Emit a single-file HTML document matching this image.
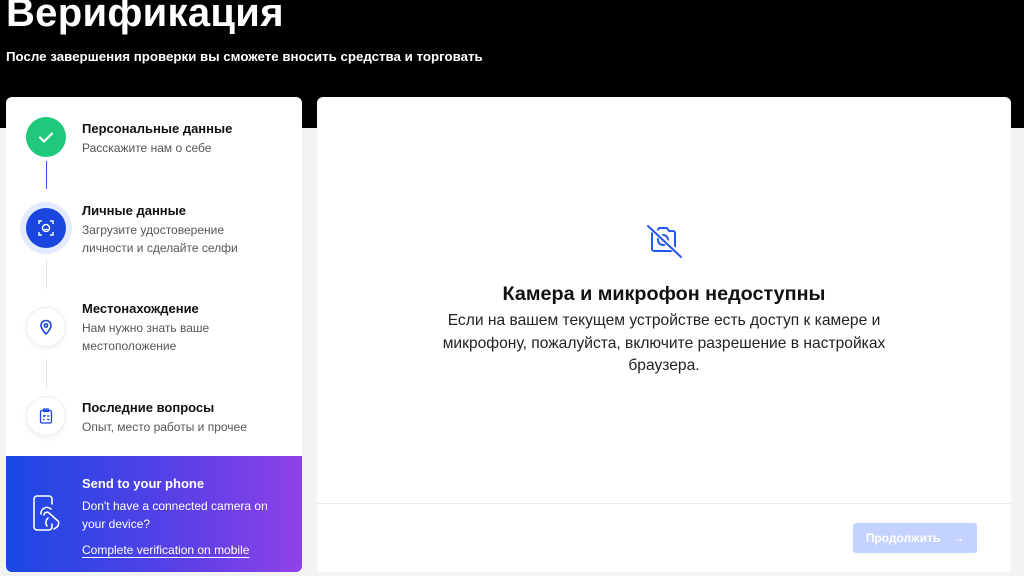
<!DOCTYPE html>
<html><head><meta charset="utf-8"><style>
*{margin:0;padding:0;box-sizing:border-box}
body{width:1024px;height:576px;overflow:hidden;background:#f3f3f3;font-family:"Liberation Sans",Arial,sans-serif;position:relative}
.hdr{position:absolute;left:0;top:0;width:1024px;height:128px;background:#000}
h1{position:absolute;left:6px;top:-9px;color:#fff;font-size:40px;font-weight:700;letter-spacing:0.3px}
.sub{position:absolute;left:6px;top:49px;color:#fff;font-size:13.3px;font-weight:700}
.left{position:absolute;left:6px;top:97px;width:296px;height:475px;background:#fff;border-radius:6px;overflow:hidden}
.step{position:absolute;left:76px}
.step b{display:block;font-size:13px;color:#111}
.step span{display:block;font-size:12px;color:#555;line-height:18px;margin-top:3px}
.circ{position:absolute;width:40px;height:40px;border-radius:50%;left:20px;display:flex;align-items:center;justify-content:center}
.line{position:absolute;left:40px;width:1px}
.promo{position:absolute;left:0;top:359px;width:296px;height:116px;background:linear-gradient(90deg,#1a48e3,#5540e6 55%,#8f41e8)}
.right{position:absolute;left:317px;top:97px;width:694px;height:475px;background:#fff;border-radius:6px}
.ttl{position:absolute;left:0;width:694px;text-align:center;top:186px;font-size:19.8px;font-weight:700;color:#111}
.desc{position:absolute;left:112px;width:470px;text-align:center;top:213px;font-size:15.6px;line-height:22.5px;color:#222}
.div{position:absolute;left:0;top:406px;width:694px;height:1px;background:#ebebeb}
.btn{position:absolute;left:536px;top:426px;width:124px;height:30px;background:#c3d2ff;border-radius:3px;color:#fff;font-size:12px;font-weight:700;display:flex;align-items:center;justify-content:center;gap:12px}
</style></head><body>
<div class="hdr"></div>
<h1>Верификация</h1>
<div class="sub">После завершения проверки вы сможете вносить средства и торговать</div>
<div class="left">
 <div class="circ" style="top:20px;background:#1ec97b"><svg width="18" height="18" viewBox="0 0 18 18"><path d="M3 9.5l4 4 8-8" stroke="#fff" stroke-width="2.2" fill="none" stroke-linecap="round" stroke-linejoin="round"/></svg></div>
 <div class="line" style="top:64px;height:28px;background:#2a55e5"></div>
 <div class="circ" style="top:111px;background:#1a45df;box-shadow:0 0 0 6px #e4eaff"><svg width="18" height="18" viewBox="0 0 18 18" fill="none" stroke="#fff" stroke-width="1.4"><path d="M2 5V2h3M13 2h3v3M16 13v3h-3M5 16H2v-3"/><circle cx="9" cy="9" r="3.5"/><path d="M7.5 10c.8.8 2.2.8 3 0"/></svg></div>
 <div class="line" style="top:162px;height:30px;background:#e6e6e6"></div>
 <div class="circ" style="top:210px;background:#fff;border:1px solid #eee;box-shadow:0 2px 6px rgba(0,0,0,.06)"><svg width="14" height="16" viewBox="0 0 14 16" fill="none" stroke="#1a45df" stroke-width="1.6"><path d="M7 15s5-5 5-8.5A5 5 0 002 6.5C2 10 7 15 7 15z"/><circle cx="7" cy="6.5" r="1.6"/></svg></div>
 <div class="line" style="top:262px;height:30px;background:#e6e6e6"></div>
 <div class="circ" style="top:299px;background:#fff;border:1px solid #eee;box-shadow:0 2px 6px rgba(0,0,0,.06)"><svg width="14" height="16" viewBox="0 0 14 16" fill="none" stroke="#1a45df" stroke-width="1.3"><rect x="1.5" y="2.5" width="11" height="12.5" rx="1.5"/><rect x="4.5" y="1" width="5" height="2.5" rx=".5"/><path d="M4 7.5l1 1 1.5-1.5M8 8h2.5M4 11.5h1.5M8 11.5h2.5"/></svg></div>
 <div class="step" style="top:24px"><b>Персональные данные</b><span>Расскажите нам о себе</span></div>
 <div class="step" style="top:106px"><b>Личные данные</b><span>Загрузите удостоверение<br>личности и сделайте селфи</span></div>
 <div class="step" style="top:204px"><b>Местонахождение</b><span>Нам нужно знать ваше<br>местоположение</span></div>
 <div class="step" style="top:303px"><b>Последние вопросы</b><span>Опыт, место работы и прочее</span></div>
 <div class="promo">
  <svg style="position:absolute;left:26px;top:38px" width="36" height="38" viewBox="0 0 36 38" fill="none" stroke="#fff" stroke-width="1.6" stroke-linecap="round" stroke-linejoin="round"><path d="M20 30v3a3 3 0 01-3 3H5a3 3 0 01-3-3V5a3 3 0 013-3h12a3 3 0 013 3v5"/><path d="M9 20a6 6 0 0110-5"/><path d="M12 21a3 3 0 015-2l9 8c1 1 1 4-1 6l-3 2"/><path d="M16 24c-2 2-3 5-1 8"/></svg>
  <div style="position:absolute;left:76px;top:19px;color:#fff"><b style="font-size:13px">Send to your phone</b><div style="font-size:12px;line-height:18px;margin-top:4px">Don't have a connected camera on<br>your device?</div><div style="font-size:12px;margin-top:10px;text-decoration:underline;text-underline-offset:3px">Complete verification on mobile</div></div>
 </div>
</div>
<div class="right">
 <svg style="position:absolute;left:323px;top:126px" width="46" height="36" viewBox="0 0 46 36" fill="none" stroke="#2457f0" stroke-width="2" stroke-linecap="round" stroke-linejoin="round"><path d="M14 8h3l2-3h8l2 3h4a2 2 0 012 2v16a2 2 0 01-2 2H14a2 2 0 01-2-2V10a2 2 0 012-2z"/><circle cx="23" cy="17" r="5"/><path d="M8 2l34 32" stroke="#fff" stroke-width="5"/><path d="M8 3l33 31"/></svg>
 <div class="ttl">Камера и микрофон недоступны</div>
 <div class="desc">Если на вашем текущем устройстве есть доступ к камере и микрофону, пожалуйста, включите разрешение в настройках браузера.</div>
 <div class="div"></div>
 <div class="btn">Продолжить <span style="font-weight:400">→</span></div>
</div>
</body></html>
